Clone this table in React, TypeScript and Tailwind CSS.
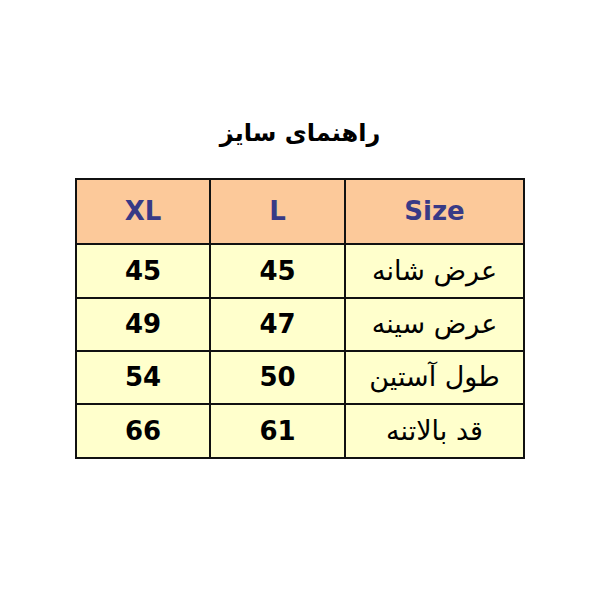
const rows = [
    { label: "عرض شانه", l: "45", xl: "45" },
    { label: "عرض سینه", l: "47", xl: "49" },
    { label: "طول آستین", l: "50", xl: "54" },
    { label: "قد بالاتنه", l: "61", xl: "66" },
]

const rowHeights = ["h-[54px]", "h-[53px]", "h-[53px]", "h-[54px]"]

export default function App() {
    return (
        <div className="w-[600px] h-[600px] bg-white flex flex-col items-center pt-[112px]">

            {/* عنوان */}
            <h1
                dir="rtl"
                className="h-[42px] leading-[42px] text-[24px] font-bold text-black font-['DejaVu_Sans',sans-serif]"
            >
                راهنمای سایز
            </h1>

            {/* جدول */}
            <table dir="rtl" className="mt-[24px] w-[448px] border-collapse border-2 border-[#111] table-fixed">
                <thead>
                    <tr className="bg-[#fcc99a] h-[65px]">
                        <th className="w-[179px] border-2 border-[#111] text-[26px] font-bold text-[#383a86] font-['DejaVu_Sans',sans-serif]" dir="ltr">
                            Size
                        </th>
                        <th className="w-[135px] border-2 border-[#111] text-[26px] font-bold text-[#383a86] font-['DejaVu_Sans',sans-serif]">
                            L
                        </th>
                        <th className="w-[134px] border-2 border-[#111] text-[26px] font-bold text-[#383a86] font-['DejaVu_Sans',sans-serif]">
                            XL
                        </th>
                    </tr>
                </thead>
                <tbody>
                    {rows.map((row, i) => (
                        <tr key={row.label} className={`bg-[#ffffcc] ${rowHeights[i]}`}>
                            <td className="border-2 border-[#111] text-center text-[27px] text-black font-['DejaVu_Sans',sans-serif]">
                                {row.label}
                            </td>
                            <td className="border-2 border-[#111] text-center text-[26px] font-bold text-black font-['DejaVu_Sans',sans-serif]">
                                {row.l}
                            </td>
                            <td className="border-2 border-[#111] text-center text-[26px] font-bold text-black font-['DejaVu_Sans',sans-serif]">
                                {row.xl}
                            </td>
                        </tr>
                    ))}
                </tbody>
            </table>

        </div>
    )
}
